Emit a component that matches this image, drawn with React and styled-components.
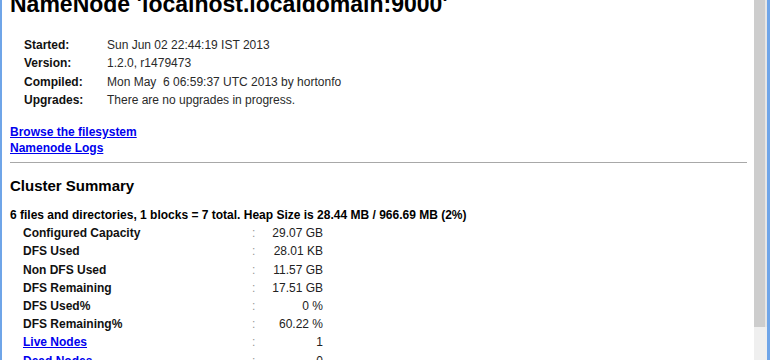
import React from "react";
import styled, { createGlobalStyle } from "styled-components";

const Global = createGlobalStyle`
  html, body { margin: 0; padding: 0; background: #fff; }
  body { font-family: "Liberation Sans", Arial, sans-serif; }
`;

const Frame = styled.div`
  display: flex;
  width: 770px;
  height: 360px;
  box-sizing: border-box;
  border-left: 2px solid #6fa5e8;
  border-right: 3px solid #6fa5e8;
  overflow: hidden;
  background: #fff;
`;

const Content = styled.div`
  flex: 1;
  min-width: 0;
  padding: 0 7px 0 8px;
  overflow: hidden;
  color: #000;
`;

const Title = styled.h1`
  margin: -9px 0 0;
  font-size: 23px;
  line-height: 26px;
  font-weight: bold;
  white-space: nowrap;
`;

const InfoGrid = styled.div`
  display: grid;
  grid-template-columns: 83px auto;
  margin: 19px 0 0 14px;
  font-size: 12px;
  line-height: 18.3px;
`;

const InfoLabel = styled.div`
  font-weight: bold;
  color: #111;
`;

const InfoValue = styled.div`
  color: #2a2a2a;
  white-space: pre;
`;

const Links = styled.div`
  display: flex;
  flex-direction: column;
  align-items: flex-start;
  margin-top: 16px;
  font-size: 12px;
  line-height: 15.5px;
`;

const Link = styled.a`
  color: #0000ee;
  font-weight: bold;
  text-decoration: underline;
`;

const Rule = styled.hr`
  margin: 6px 0 0;
  border: none;
  border-top: 1px solid #a8a8a8;
  height: 0;
`;

const Heading = styled.h2`
  margin: 14px 0 0;
  font-size: 15px;
  line-height: 18px;
  font-weight: bold;
`;

const Summary = styled.div`
  margin-top: 11px;
  font-size: 12px;
  line-height: 18px;
  font-weight: bold;
`;

const StatsGrid = styled.div`
  display: grid;
  grid-template-columns: 229px 6px 65px;
  margin-left: 13px;
  font-size: 12px;
  line-height: 18.2px;
`;

const StatLabel = styled.div`
  font-weight: bold;
  color: #111;
`;

const Colon = styled.div`
  color: #999;
`;

const StatValue = styled.div`
  text-align: right;
  color: #222;
`;

const Scrollbar = styled.div`
  display: flex;
  flex-direction: column;
  width: 13px;
  flex: none;
  background: #efefef;
`;

const Thumb = styled.div`
  height: 327px;
  background: #cdcdcd;
  border-right: 2px solid #e6e6e6;
  box-sizing: border-box;
`;

const info = [
  ["Started:", "Sun Jun 02 22:44:19 IST 2013"],
  ["Version:", "1.2.0, r1479473"],
  ["Compiled:", "Mon May  6 06:59:37 UTC 2013 by hortonfo"],
  ["Upgrades:", "There are no upgrades in progress."],
];

const stats = [
  ["Configured Capacity", "29.07 GB"],
  ["DFS Used", "28.01 KB"],
  ["Non DFS Used", "11.57 GB"],
  ["DFS Remaining", "17.51 GB"],
  ["DFS Used%", "0 %"],
  ["DFS Remaining%", "60.22 %"],
  ["Live Nodes", "1", true],
  ["Dead Nodes", "0", true],
];

export default function App() {
  return (
    <>
      <Global />
      <Frame>
        <Content>
          <Title>NameNode 'localhost.localdomain:9000'</Title>
          <InfoGrid>
            {info.map(([k, v]) => (
              <React.Fragment key={k}>
                <InfoLabel>{k}</InfoLabel>
                <InfoValue>{v}</InfoValue>
              </React.Fragment>
            ))}
          </InfoGrid>
          <Links>
            <Link href="#">Browse the filesystem</Link>
            <Link href="#">Namenode Logs</Link>
          </Links>
          <Rule />
          <Heading>Cluster Summary</Heading>
          <Summary>
            6 files and directories, 1 blocks = 7 total. Heap Size is 28.44 MB / 966.69 MB (2%)
          </Summary>
          <StatsGrid>
            {stats.map(([k, v, link]) => (
              <React.Fragment key={k}>
                <StatLabel>{link ? <Link href="#">{k}</Link> : k}</StatLabel>
                <Colon>:</Colon>
                <StatValue>{v}</StatValue>
              </React.Fragment>
            ))}
          </StatsGrid>
        </Content>
        <Scrollbar>
          <Thumb />
        </Scrollbar>
      </Frame>
    </>
  );
}
